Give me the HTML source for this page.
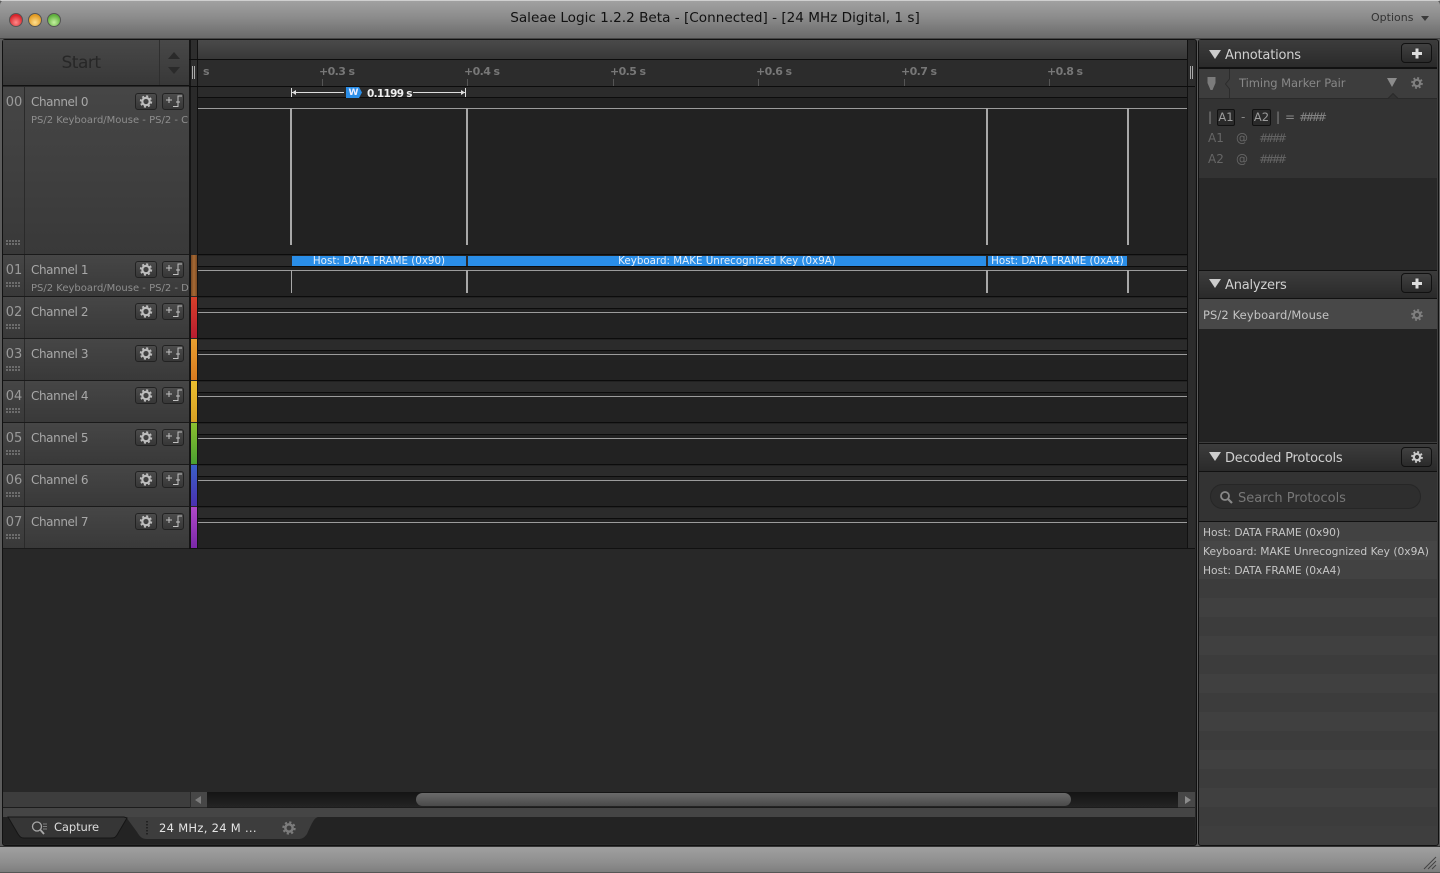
<!DOCTYPE html>
<html><head><meta charset="utf-8"><title>Saleae Logic</title>
<style>
html,body{margin:0;padding:0;width:1440px;height:873px;overflow:hidden;background:#5c5c5c}
body{position:relative;font-family:"DejaVu Sans","Liberation Sans",sans-serif;font-size:11px;color:#aaa}
div,span.t{position:absolute;white-space:nowrap}
.row{left:3px;width:186px;background:linear-gradient(#464646,#393939);border-bottom:1px solid #1a1a1a}
.id{left:0;top:8px;width:22px;text-align:center;font-size:13px;color:#9a9a9a;line-height:16px}
.sep{left:21px;top:0;bottom:0;width:1px;background:#2a2a2a}
.nm{left:28px;top:8px;font-size:12px;line-height:15px;color:#a8a8a8;letter-spacing:-.4px}
.sub{left:28px;font-size:10px;line-height:13px;color:#8e8e8e;width:158px;overflow:hidden}
.btn{width:20px;height:15px;border:1px solid #222;border-radius:3px;background:linear-gradient(#4c4c4c,#373737);top:6px}
.btn svg{position:absolute;left:0;top:0}
.dots{left:3px;width:15px;height:6px;background-image:radial-gradient(circle at 1px 1px,#7c7c7c 0.8px,transparent 1px);background-size:3px 3px}
.wave{left:198px;width:989px;background:#222}
.band{left:0;top:0;width:100%;height:10px;background:#2b2b2b;border-bottom:1px solid #0c0c0c}
.ln{left:0;width:100%;height:1px;background:#9c9c9c}
.strip{left:191px;width:6px}
.rh{left:1199px;width:238px;height:27px;background:linear-gradient(#3c3c3c,#2a2a2a);border-bottom:2px solid #111}
.rh .tt{left:26px;top:6px;font-size:13px;line-height:18px;color:#d0d0d0;letter-spacing:-.2px}
.tri{left:10px;top:8px;width:0;height:0;border-left:6px solid transparent;border-right:6px solid transparent;border-top:9px solid #ccc}
.pb{left:202px;top:3px;width:29px;height:18px;border:1px solid #111;border-radius:4px;background:linear-gradient(#414141,#2a2a2a)}
.stripe{left:1199px;width:238px;height:19px}
.li{left:1203px;font-size:10.7px;line-height:14px;color:#c6c6c6}
.tick{top:79px;width:1px;height:7px;background:#555}
.rl{top:65px;font-size:11px;line-height:14px;color:#777;font-weight:bold;letter-spacing:-.6px}
.v2{width:2px;background:#a8a8a8}
.bub{top:0;height:10px;background:#2a8ee8;color:#e6f0fa;font-size:10.3px;line-height:10px;text-align:center;overflow:hidden}
.h4{font-size:11.500px;line-height:15px;letter-spacing:-3.500px}
</style></head><body>

<svg width="0" height="0" style="position:absolute"><defs>
<symbol id="g" viewBox="0 0 20 15"><circle cx="10" cy="7.5" r="3.7" fill="none" stroke="#bdbdbd" stroke-width="2.2"/><circle cx="10" cy="7.5" r="5.4" fill="none" stroke="#bdbdbd" stroke-width="1.6" stroke-dasharray="2.1 2.14"/></symbol>
<symbol id="e" viewBox="0 0 20 15"><path d="M3 6h6M6 3v6M10 12.5h5V2h4M13 8h4" fill="none" stroke="#c0c0c0" stroke-width="1"/></symbol>
<symbol id="gg" viewBox="0 0 14 14"><circle cx="7" cy="7" r="3.2" fill="none" stroke="currentColor" stroke-width="2.2"/><circle cx="7" cy="7" r="5" fill="none" stroke="currentColor" stroke-width="1.7" stroke-dasharray="1.95 1.98"/></symbol>
</defs></svg>

<!-- title bar -->
<div style="left:0;top:0;width:1440px;height:38px;background:linear-gradient(#a2a2a2 0,#8c8c8c 45%,#6a6a6a 100%);border-radius:5px 5px 0 0;border-bottom:1px solid #444"></div>
<div style="left:0;top:0;width:1440px;height:1px;background:#cfcfcf;border-radius:5px 5px 0 0"></div>
<div style="left:9px;top:13px;width:12px;height:12px;border-radius:50%;background:radial-gradient(circle at 50% 70%,#ff8a8a,#d8232a 70%);border:.5px solid #555"></div>
<div style="left:28px;top:13px;width:12px;height:12px;border-radius:50%;background:radial-gradient(circle at 50% 70%,#ffdf90,#e29a22 70%);border:.5px solid #555"></div>
<div style="left:47px;top:13px;width:12px;height:12px;border-radius:50%;background:radial-gradient(circle at 50% 70%,#c4f0a0,#5fb03c 70%);border:.5px solid #555"></div>
<div style="left:440px;width:550px;top:10px;text-align:center;font-size:13.6px;line-height:17px;color:#111">Saleae Logic 1.2.2 Beta - [Connected] - [24 MHz Digital, 1 s]</div>
<div style="left:1371px;top:10px;font-size:11px;line-height:15px;color:#333">Options</div>
<div style="left:1421px;top:16px;width:0;height:0;border-left:4.5px solid transparent;border-right:4.5px solid transparent;border-top:5px solid #3a3a3a"></div>

<!-- left panel -->
<div style="left:2px;top:39px;width:1193px;height:805px;background:#282828;border:1px solid #111;border-radius:3px"></div>
<!-- start -->
<div style="left:3px;top:40px;width:186px;height:45px;background:linear-gradient(#484848,#383838);border-bottom:1px solid #111"></div>
<div style="left:3px;width:156px;top:52px;text-align:center;font-size:17px;line-height:22px;color:#272727;letter-spacing:-.5px">Start</div>
<div style="left:159px;top:40px;width:1px;height:45px;background:#2f2f2f"></div>
<div style="left:168px;top:52px;width:0;height:0;border-left:6px solid transparent;border-right:6px solid transparent;border-bottom:7px solid #2a2a2a"></div>
<div style="left:168px;top:67px;width:0;height:0;border-left:6px solid transparent;border-right:6px solid transparent;border-top:7px solid #2a2a2a"></div>
<div style="left:189px;top:40px;width:2px;height:508px;background:#151515"></div>
<div style="left:191px;top:40px;width:7px;height:46px;background:#2e2e2e"></div>
<div style="left:197px;top:40px;width:1px;height:508px;background:#111"></div>
<div style="left:189px;top:59px;width:1000px;height:1px;background:#0c0c0c"></div>
<!-- timeline header -->
<div style="left:198px;top:40px;width:989px;height:19px;background:linear-gradient(#4a4a4a,#383838)"></div>
<div style="left:1187px;top:40px;width:8px;height:508px;background:#2c2c2c;border-left:1px solid #111;box-sizing:border-box"></div>
<div style="left:198px;top:60px;width:989px;height:26px;background:#2c2c2c"></div>
<div style="left:189px;top:86px;width:1006px;height:1px;background:#0c0c0c"></div>
<div style="left:192px;top:66px;width:1px;height:13px;background:#aaa"></div><div style="left:194px;top:66px;width:1px;height:13px;background:#aaa"></div>
<div style="left:1190px;top:66px;width:1px;height:13px;background:#aaa"></div><div style="left:1192px;top:66px;width:1px;height:13px;background:#aaa"></div>
<div class="rl" style="left:203px">s</div>
<div class="rl" style="left:319px">+0.3 s</div><div class="tick" style="left:322px"></div>
<div class="rl" style="left:464px">+0.4 s</div><div class="tick" style="left:467px"></div>
<div class="rl" style="left:610px">+0.5 s</div><div class="tick" style="left:613px"></div>
<div class="rl" style="left:756px">+0.6 s</div><div class="tick" style="left:758px"></div>
<div class="rl" style="left:901px">+0.7 s</div><div class="tick" style="left:904px"></div>
<div class="rl" style="left:1047px">+0.8 s</div><div class="tick" style="left:1049px"></div>

<!-- channels -->
<div class="row" style="top:87px;height:167px"><div class="id">00</div><div class="sep"></div><div class="nm">Channel 0</div><div class="sub" style="top:27px">PS/2 Keyboard/Mouse - PS/2 - Clock</div><div class="btn" style="left:132px"><svg width="20" height="15"><use href="#g"/></svg></div><div class="btn" style="left:159px"><svg width="20" height="15"><use href="#e"/></svg></div><div class="dots" style="top:153px"></div></div>
<div class="row" style="top:255px;height:41px"><div class="id">01</div><div class="sep"></div><div class="nm">Channel 1</div><div class="sub" style="top:27px">PS/2 Keyboard/Mouse - PS/2 - Data</div><div class="btn" style="left:132px"><svg width="20" height="15"><use href="#g"/></svg></div><div class="btn" style="left:159px"><svg width="20" height="15"><use href="#e"/></svg></div><div class="dots" style="top:27px"></div></div>
<div class="row" style="top:297px;height:41px"><div class="id">02</div><div class="sep"></div><div class="nm">Channel 2</div><div class="btn" style="left:132px"><svg width="20" height="15"><use href="#g"/></svg></div><div class="btn" style="left:159px"><svg width="20" height="15"><use href="#e"/></svg></div><div class="dots" style="top:27px"></div></div>
<div class="row" style="top:339px;height:41px"><div class="id">03</div><div class="sep"></div><div class="nm">Channel 3</div><div class="btn" style="left:132px"><svg width="20" height="15"><use href="#g"/></svg></div><div class="btn" style="left:159px"><svg width="20" height="15"><use href="#e"/></svg></div><div class="dots" style="top:27px"></div></div>
<div class="row" style="top:381px;height:41px"><div class="id">04</div><div class="sep"></div><div class="nm">Channel 4</div><div class="btn" style="left:132px"><svg width="20" height="15"><use href="#g"/></svg></div><div class="btn" style="left:159px"><svg width="20" height="15"><use href="#e"/></svg></div><div class="dots" style="top:27px"></div></div>
<div class="row" style="top:423px;height:41px"><div class="id">05</div><div class="sep"></div><div class="nm">Channel 5</div><div class="btn" style="left:132px"><svg width="20" height="15"><use href="#g"/></svg></div><div class="btn" style="left:159px"><svg width="20" height="15"><use href="#e"/></svg></div><div class="dots" style="top:27px"></div></div>
<div class="row" style="top:465px;height:41px"><div class="id">06</div><div class="sep"></div><div class="nm">Channel 6</div><div class="btn" style="left:132px"><svg width="20" height="15"><use href="#g"/></svg></div><div class="btn" style="left:159px"><svg width="20" height="15"><use href="#e"/></svg></div><div class="dots" style="top:27px"></div></div>
<div class="row" style="top:507px;height:41px"><div class="id">07</div><div class="sep"></div><div class="nm">Channel 7</div><div class="btn" style="left:132px"><svg width="20" height="15"><use href="#g"/></svg></div><div class="btn" style="left:159px"><svg width="20" height="15"><use href="#e"/></svg></div><div class="dots" style="top:27px"></div></div>

<!-- color strips -->
<div class="strip" style="top:87px;height:167px;background:#2a2a2a"></div>
<div class="strip" style="top:255px;height:41px;background:linear-gradient(90deg,#7a4a24,#a86a34,#7a4a24)"></div>
<div class="strip" style="top:297px;height:41px;background:linear-gradient(#d8402a,#b81c30)"></div>
<div class="strip" style="top:339px;height:41px;background:linear-gradient(#e8a030,#d87a20)"></div>
<div class="strip" style="top:381px;height:41px;background:linear-gradient(#ecc030,#d8a024)"></div>
<div class="strip" style="top:423px;height:41px;background:linear-gradient(#8cc030,#4aa030)"></div>
<div class="strip" style="top:465px;height:41px;background:linear-gradient(#3a60c8,#4a30b0)"></div>
<div class="strip" style="top:507px;height:41px;background:linear-gradient(#b048c8,#7a28a8)"></div>

<!-- waves -->
<div class="wave" style="top:87px;height:168px"><div class="band"></div><div class="ln" style="top:21px"></div>
<div class="v2" style="left:92px;top:21px;height:137px"></div><div class="v2" style="left:268px;top:21px;height:137px"></div><div class="v2" style="left:788px;top:21px;height:137px"></div><div class="v2" style="left:929px;top:21px;height:137px"></div></div>
<div class="wave" style="top:255px;height:41px;background:#222"><div class="band" style="top:1px"></div><div class="ln" style="top:15px"></div>
<div class="bub" style="left:94px;top:1px;width:174px">Host: DATA FRAME (0x90)</div><div class="bub" style="left:270px;top:1px;width:518px">Keyboard: MAKE Unrecognized Key (0x9A)</div><div class="bub" style="left:790px;top:1px;width:139px">Host: DATA FRAME (0xA4)</div>
<div class="v2" style="left:93px;top:15px;height:23px;width:1px"></div><div class="v2" style="left:268px;top:15px;height:23px;width:2px"></div><div class="v2" style="left:788px;top:15px;height:23px;width:2px"></div><div class="v2" style="left:929px;top:15px;height:23px;width:2px"></div></div>
<div class="wave" style="top:297px;height:41px"><div class="band" style="top:1px"></div><div class="ln" style="top:15px"></div></div>
<div class="wave" style="top:339px;height:41px"><div class="band" style="top:1px"></div><div class="ln" style="top:15px"></div></div>
<div class="wave" style="top:381px;height:41px"><div class="band" style="top:1px"></div><div class="ln" style="top:15px"></div></div>
<div class="wave" style="top:423px;height:41px"><div class="band" style="top:1px"></div><div class="ln" style="top:15px"></div></div>
<div class="wave" style="top:465px;height:41px"><div class="band" style="top:1px"></div><div class="ln" style="top:15px"></div></div>
<div class="wave" style="top:507px;height:41px"><div class="band" style="top:1px"></div><div class="ln" style="top:15px"></div></div>
<div style="left:198px;top:338px;width:989px;height:1px;background:#0c0c0c"></div>
<div style="left:198px;top:380px;width:989px;height:1px;background:#0c0c0c"></div>
<div style="left:198px;top:422px;width:989px;height:1px;background:#0c0c0c"></div>
<div style="left:198px;top:464px;width:989px;height:1px;background:#0c0c0c"></div>
<div style="left:198px;top:506px;width:989px;height:1px;background:#0c0c0c"></div>
<div style="left:198px;top:296px;width:989px;height:1px;background:#0c0c0c"></div>
<div style="left:198px;top:254px;width:989px;height:1px;background:#0c0c0c"></div>
<div style="left:189px;top:548px;width:1006px;height:1px;background:#111"></div>

<!-- measurement -->
<svg style="position:absolute;left:285px;top:86px" width="190" height="14"><path d="M6.5 2v9M7 6.5h52M180.500 2v9M128 6.500h52" stroke="#ddd" fill="none"/><path d="M7 6.500l4-2.500v5zM180 6.500l-4-2.500v5z" fill="#ddd"/><path d="M61 1h13l3 5.500-3 5.500H61z" fill="#2a8ee8"/></svg>
<div style="left:346px;top:87px;width:15px;text-align:center;font-size:9px;font-weight:bold;line-height:12px;color:#eef">W</div>
<div style="left:367px;top:87px;font-size:10.500px;line-height:14px;color:#eee;font-weight:bold;letter-spacing:-.7px">0.1199 s</div>

<!-- scrollbar -->
<div style="left:3px;top:792px;width:187px;height:15px;background:#3d3d3d;border-bottom:1px solid #1c1c1c"></div>
<div style="left:190px;top:792px;width:17px;height:15px;background:#474747;border-left:1px solid #2a2a2a;box-sizing:border-box"></div>
<div style="left:195px;top:796px;width:0;height:0;border-top:4px solid transparent;border-bottom:4px solid transparent;border-right:6px solid #7c7c7c"></div>
<div style="left:207px;top:792px;width:971px;height:15px;background:linear-gradient(#141414,#242424);border-bottom:1px solid #1c1c1c"></div>
<div style="left:416px;top:793px;width:655px;height:13px;border-radius:7px;background:linear-gradient(#6a6a6a,#4a4a4a)"></div>
<div style="left:1178px;top:792px;width:17px;height:15px;background:#474747"></div>
<div style="left:1185px;top:796px;width:0;height:0;border-top:4px solid transparent;border-bottom:4px solid transparent;border-left:6px solid #8c8c8c"></div>
<div style="left:3px;top:808px;width:1192px;height:9px;background:#454545"></div>

<!-- tabs -->
<div style="left:3px;top:817px;width:1192px;height:27px;background:#232323;border-radius:0 0 3px 3px"></div>
<svg style="position:absolute;left:0;top:815px" width="330" height="30"><path d="M126 2H318c-4 1-6 6-11 17-3 4-5 5-9 5H147c-5 0-7-2-10-7z" fill="#3d3d3d"/><path d="M8 2h116l3 1-10 17c-2 3-3 3-6 3H24c-3 0-4-1-6-4z" fill="#363636" stroke="#151515"/></svg>
<svg style="position:absolute;left:30px;top:820px" width="20" height="16"><circle cx="7" cy="6.500" r="4.500" fill="none" stroke="#a8a8a8" stroke-width="1.300"/><path d="M10.500 10l3.500 4" stroke="#a8a8a8" stroke-width="1.800"/><path d="M13 4h4M13 6.500h4M13 9h4" stroke="#999" stroke-width=".8"/></svg>
<div style="left:54px;top:820px;font-size:11.500px;line-height:15px;color:#ddd;letter-spacing:-.1px">Capture</div>
<div style="left:146px;top:821px;width:2px;height:15px;background-image:linear-gradient(#222 50%,transparent 50%);background-size:2px 3px"></div>
<div style="left:159px;top:821px;font-size:11.500px;line-height:15px;color:#e4e4e4;letter-spacing:.3px">24 MHz, 24 M ...</div>
<svg style="position:absolute;left:281px;top:820px;color:#7c7c7c" width="16" height="16" viewBox="0 0 14 14"><use href="#gg"/></svg>

<!-- right panel -->
<div style="left:1198px;top:39px;width:239px;height:805px;background:#3e3e3e;border:1px solid #111;border-radius:3px"></div>
<div class="rh" style="top:40px"><div class="tri" style="top:10px"></div><div class="tt" style="top:5px;margin-top:2px">Annotations</div><div class="pb"></div><svg style="position:absolute;left:211px;top:6px" width="14" height="16"><path d="M7 2.500v10M2 7.500h10" stroke="#ddd" stroke-width="3"/></svg></div>
<div style="left:1199px;top:69px;width:238px;height:29px;background:#3d3d3d;border-bottom:1px solid #2a2a2a"></div>
<svg style="position:absolute;left:1224px;top:69px" width="8" height="29"><path d="M5.500 0V10L1.500 15l4 5V29" stroke="#2c2c2c" fill="none"/></svg>
<svg style="position:absolute;left:1206px;top:76px" width="12" height="15"><path d="M1.500 1h8v6l-3 7h-2l-3-7z" fill="#7c7c7c"/></svg>
<div style="left:1239px;top:76px;font-size:11.500px;line-height:15px;color:#888;letter-spacing:-.05px">Timing Marker Pair</div>
<div style="left:1387px;top:78px;width:0;height:0;border-left:5.500px solid transparent;border-right:5.500px solid transparent;border-top:9px solid #8c8c8c"></div>
<svg style="position:absolute;left:1410px;top:76px;color:#808080" width="14" height="14"><use href="#gg"/></svg>
<div style="left:1199px;top:99px;width:238px;height:79px;background:#333"></div>
<svg style="position:absolute;left:1384px;top:93px" width="18" height="6"><path d="M0 5.500h4l5-5 5 5h4" fill="#333" stroke="#2a2a2a"/></svg>
<div style="left:1199px;top:178px;width:238px;height:92px;background:#282828"></div>
<div style="left:1208px;top:110px;font-size:12px;line-height:15px;color:#888">|</div>
<div style="left:1217px;top:109px;width:16px;height:15px;border:1px solid #111;border-radius:2px;background:#2a2a2a;font-size:11.500px;line-height:15px;text-align:center;color:#9c9c9c">A1</div>
<div style="left:1241px;top:110px;font-size:12px;line-height:15px;color:#888">-</div>
<div style="left:1252px;top:109px;width:17px;height:15px;border:1px solid #111;border-radius:2px;background:#2a2a2a;font-size:11.500px;line-height:15px;text-align:center;color:#9c9c9c">A2</div>
<div style="left:1276px;top:110px;font-size:12px;line-height:15px;color:#888">|</div>
<div style="left:1285px;top:110px;font-size:12px;line-height:15px;color:#888">=</div>
<div class="h4" style="left:1299px;top:110px;color:#888">####</div>
<div style="left:1208px;top:131px;font-size:12px;line-height:15px;color:#666">A1</div>
<div style="left:1236px;top:131px;font-size:12px;line-height:15px;color:#666">@</div>
<div class="h4" style="left:1259px;top:131px;color:#666">####</div>
<div style="left:1208px;top:152px;font-size:12px;line-height:15px;color:#666">A2</div>
<div style="left:1236px;top:152px;font-size:12px;line-height:15px;color:#666">@</div>
<div class="h4" style="left:1259px;top:152px;color:#666">####</div>

<div class="rh" style="top:270px;border-top:1px solid #111"><div class="tri"></div><div class="tt">Analyzers</div><div class="pb" style="top:2px"></div><svg style="position:absolute;left:211px;top:5px" width="14" height="16"><path d="M7 2.500v10M2 7.500h10" stroke="#ddd" stroke-width="3"/></svg></div>
<div style="left:1199px;top:299px;width:238px;height:30px;background:#484848"></div>
<div style="left:1203px;top:307px;font-size:11.500px;line-height:16px;color:#c4c4c4;letter-spacing:.1px">PS/2 Keyboard/Mouse</div>
<svg style="position:absolute;left:1410px;top:308px;color:#808080" width="14" height="14"><use href="#gg"/></svg>
<div style="left:1199px;top:329px;width:238px;height:113px;background:#232323"></div>

<div class="rh" style="top:443px;border-top:1px solid #111"><div class="tri"></div><div class="tt">Decoded Protocols</div><div class="pb"></div><svg style="position:absolute;left:211px;top:6px;color:#ccc" width="14" height="14"><use href="#gg"/></svg></div>
<div style="left:1199px;top:472px;width:238px;height:50px;background:#333;border-bottom:1px solid #111;box-sizing:border-box"></div>
<div style="left:1210px;top:484px;width:209px;height:23px;border:1px solid #262626;border-radius:13px;background:#2e2e2e"></div>
<svg style="position:absolute;left:1219px;top:490px" width="15" height="15"><circle cx="6" cy="6" r="4" fill="none" stroke="#888" stroke-width="1.800"/><path d="M9 9l4 4" stroke="#888" stroke-width="2.200"/></svg>
<div style="left:1238px;top:490px;font-size:13px;line-height:18px;color:#777">Search Protocols</div>

<div class="stripe" style="top:522px;background:#424242"></div>
<div class="stripe" style="top:541px;background:#464646"></div>
<div class="stripe" style="top:560px;background:#424242"></div>
<div class="stripe" style="top:579px;background:#3c3c3c"></div>
<div class="stripe" style="top:598px;background:#404040"></div>
<div class="stripe" style="top:617px;background:#3c3c3c"></div>
<div class="stripe" style="top:636px;background:#404040"></div>
<div class="stripe" style="top:655px;background:#3c3c3c"></div>
<div class="stripe" style="top:674px;background:#404040"></div>
<div class="stripe" style="top:693px;background:#3c3c3c"></div>
<div class="stripe" style="top:712px;background:#404040"></div>
<div class="stripe" style="top:731px;background:#3c3c3c"></div>
<div class="stripe" style="top:750px;background:#404040"></div>
<div class="stripe" style="top:769px;background:#3c3c3c"></div>
<div class="stripe" style="top:788px;background:#404040"></div>
<div class="stripe" style="top:807px;background:#3c3c3c"></div>
<div class="stripe" style="top:826px;height:18px;background:#3e3e3e;border-radius:0 0 3px 3px"></div>
<div class="li" style="top:526px">Host: DATA FRAME (0x90)</div>
<div class="li" style="top:545px">Keyboard: MAKE Unrecognized Key (0x9A)</div>
<div class="li" style="top:564px">Host: DATA FRAME (0xA4)</div>

<!-- status bar -->
<div style="left:0;top:846px;width:1440px;height:1px;background:#333"></div>
<div style="left:0;top:847px;width:1440px;height:26px;background:linear-gradient(#a0a0a0 0,#8e8e8e 60%,#7c7c7c 100%)"></div>
<div style="left:0;top:872px;width:1440px;height:1px;background:#555"></div>
<svg style="position:absolute;left:1422px;top:855px" width="15" height="15"><path d="M2 14L14 2M6 14l8-8M10 14l4-4" stroke="#444" fill="none"/></svg>
</body></html>
